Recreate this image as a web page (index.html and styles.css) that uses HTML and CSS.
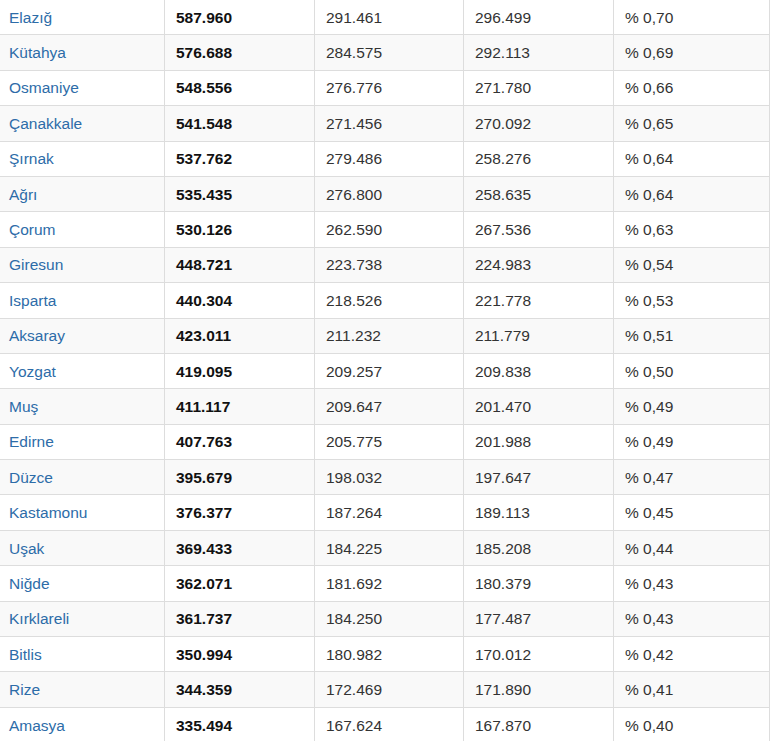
FILE: index.html
```html
<!DOCTYPE html>
<html lang="tr">
<head>
<meta charset="utf-8">
<title>İl nüfusları</title>
<link rel="stylesheet" href="styles.css">
</head>
<body>
<table class="pop">
<colgroup>
<col class="c1"><col class="c2"><col class="c3"><col class="c4"><col class="c5">
</colgroup>
<tbody>
<tr><td><a href="#">Elazığ</a></td><td class="tot">587.960</td><td>291.461</td><td>296.499</td><td>% 0,70</td></tr>
<tr><td><a href="#">Kütahya</a></td><td class="tot">576.688</td><td>284.575</td><td>292.113</td><td>% 0,69</td></tr>
<tr><td><a href="#">Osmaniye</a></td><td class="tot">548.556</td><td>276.776</td><td>271.780</td><td>% 0,66</td></tr>
<tr><td><a href="#">Çanakkale</a></td><td class="tot">541.548</td><td>271.456</td><td>270.092</td><td>% 0,65</td></tr>
<tr><td><a href="#">Şırnak</a></td><td class="tot">537.762</td><td>279.486</td><td>258.276</td><td>% 0,64</td></tr>
<tr><td><a href="#">Ağrı</a></td><td class="tot">535.435</td><td>276.800</td><td>258.635</td><td>% 0,64</td></tr>
<tr><td><a href="#">Çorum</a></td><td class="tot">530.126</td><td>262.590</td><td>267.536</td><td>% 0,63</td></tr>
<tr><td><a href="#">Giresun</a></td><td class="tot">448.721</td><td>223.738</td><td>224.983</td><td>% 0,54</td></tr>
<tr><td><a href="#">Isparta</a></td><td class="tot">440.304</td><td>218.526</td><td>221.778</td><td>% 0,53</td></tr>
<tr><td><a href="#">Aksaray</a></td><td class="tot">423.011</td><td>211.232</td><td>211.779</td><td>% 0,51</td></tr>
<tr><td><a href="#">Yozgat</a></td><td class="tot">419.095</td><td>209.257</td><td>209.838</td><td>% 0,50</td></tr>
<tr><td><a href="#">Muş</a></td><td class="tot">411.117</td><td>209.647</td><td>201.470</td><td>% 0,49</td></tr>
<tr><td><a href="#">Edirne</a></td><td class="tot">407.763</td><td>205.775</td><td>201.988</td><td>% 0,49</td></tr>
<tr><td><a href="#">Düzce</a></td><td class="tot">395.679</td><td>198.032</td><td>197.647</td><td>% 0,47</td></tr>
<tr><td><a href="#">Kastamonu</a></td><td class="tot">376.377</td><td>187.264</td><td>189.113</td><td>% 0,45</td></tr>
<tr><td><a href="#">Uşak</a></td><td class="tot">369.433</td><td>184.225</td><td>185.208</td><td>% 0,44</td></tr>
<tr><td><a href="#">Niğde</a></td><td class="tot">362.071</td><td>181.692</td><td>180.379</td><td>% 0,43</td></tr>
<tr><td><a href="#">Kırklareli</a></td><td class="tot">361.737</td><td>184.250</td><td>177.487</td><td>% 0,43</td></tr>
<tr><td><a href="#">Bitlis</a></td><td class="tot">350.994</td><td>180.982</td><td>170.012</td><td>% 0,42</td></tr>
<tr><td><a href="#">Rize</a></td><td class="tot">344.359</td><td>172.469</td><td>171.890</td><td>% 0,41</td></tr>
<tr><td><a href="#">Amasya</a></td><td class="tot">335.494</td><td>167.624</td><td>167.870</td><td>% 0,40</td></tr>
</tbody>
</table>
</body>
</html>
```

FILE: styles.css
```css
html, body {
  margin: 0;
  padding: 0;
  background: #fff;
}

.pop {
  width: 770px;
  table-layout: fixed;
  border-collapse: separate;
  border-spacing: 0;
  font-family: "Liberation Sans", Arial, sans-serif;
  font-size: 15.5px;
  color: #333;
}

.c1 { width: 165px; }
.c2 { width: 150px; }
.c3 { width: 149px; }
.c4 { width: 150px; }
.c5 { width: 156px; }

.pop tr {
  height: 35.4px;
}

.pop tr:nth-child(even) {
  background: #f9f9f9;
}

.pop td {
  padding: 1px 10px 0 11px;
  border-right: 1px solid #dddddd;
  border-bottom: 1px solid #dddddd;
  vertical-align: middle;
  line-height: 20px;
  white-space: nowrap;
}

.pop td:first-child {
  padding-left: 9px;
}

.pop a {
  color: #2d6ca8;
  text-decoration: none;
}

.pop .tot {
  font-weight: bold;
  color: #111;
}
```
